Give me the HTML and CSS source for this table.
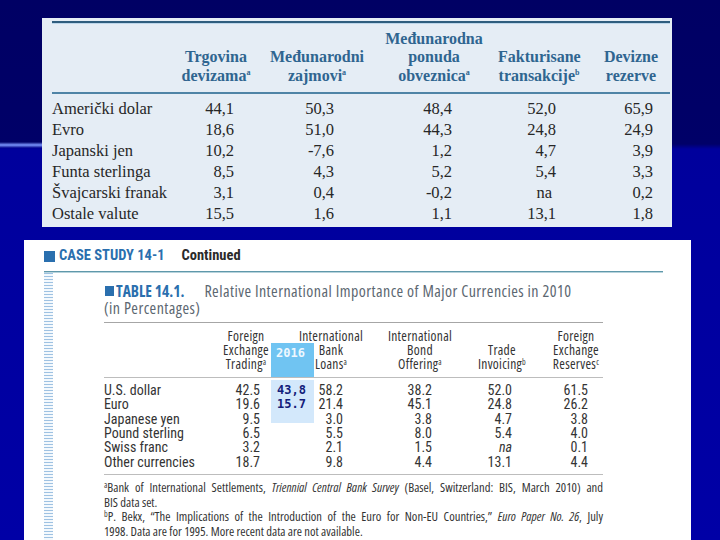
FILE: index.html
```html
<!DOCTYPE html>
<html lang="sr">
<head>
<meta charset="utf-8">
<title>Relativna međunarodna važnost glavnih valuta</title>
<link rel="stylesheet" href="styles.css">
</head>
<body>
<div class="slide">
  <div class="sheet-sr">
    <div class="sr-rule"></div>
    <div class="sr-grid sr-head">
      <div></div>
      <div>Trgovina<br>devizama<sup>a</sup></div>
      <div>Međunarodni<br>zajmovi<sup>a</sup></div>
      <div>Međunarodna<br>ponuda<br>obveznica<sup>a</sup></div>
      <div>Fakturisane<br>transakcije<sup>b</sup></div>
      <div>Devizne<br>rezerve</div>
    </div>
    <div class="sr-grid sr-body">
      <div class="lab">Američki dolar</div><div class="v">44,1</div><div class="v">50,3</div><div class="v">48,4</div><div class="v">52,0</div><div class="v">65,9</div>
      <div class="lab">Evro</div><div class="v">18,6</div><div class="v">51,0</div><div class="v">44,3</div><div class="v">24,8</div><div class="v">24,9</div>
      <div class="lab">Japanski jen</div><div class="v">10,2</div><div class="v">-7,6</div><div class="v">1,2</div><div class="v">4,7</div><div class="v">3,9</div>
      <div class="lab">Funta sterlinga</div><div class="v">8,5</div><div class="v">4,3</div><div class="v">5,2</div><div class="v">5,4</div><div class="v">3,3</div>
      <div class="lab">Švajcarski franak</div><div class="v">3,1</div><div class="v">0,4</div><div class="v">-0,2</div><div class="v na">na</div><div class="v">0,2</div>
      <div class="lab">Ostale valute</div><div class="v">15,5</div><div class="v">1,6</div><div class="v">1,1</div><div class="v">13,1</div><div class="v">1,8</div>
    </div>
  </div>

  <div class="sheet-en">
    <div class="case"><span class="sq"></span><span class="case-t">CASE STUDY 14-1</span><span class="case-c">Continued</span></div>
    <div class="case-rule"></div>
    <div class="en-body">
      <div class="stripes"></div>
      <div class="en-content">
        <div class="title"><span class="tsq"></span><span class="tnum">TABLE 14.1.</span><span class="ttxt">Relative International Importance of Major Currencies in 2010</span></div>
        <div class="title sub">(in Percentages)</div>
        <div class="t2">
          <div class="en-grid en-head">
            <div></div>
            <div>Foreign<br>Exchange<br>Trading<sup>a</sup></div>
            <div>International<br>Bank<br>Loans<sup>a</sup></div>
            <div>International<br>Bond<br>Offering<sup>a</sup></div>
            <div>Trade<br>Invoicing<sup>b</sup></div>
            <div>Foreign<br>Exchange<br>Reserves<sup>c</sup></div>
          </div>
          <div class="en-grid en-rows">
            <div class="lab">U.S. dollar</div><div class="v">42.5</div><div class="v">58.2</div><div class="v">38.2</div><div class="v">52.0</div><div class="v">61.5</div>
            <div class="lab">Euro</div><div class="v">19.6</div><div class="v">21.4</div><div class="v">45.1</div><div class="v">24.8</div><div class="v">26.2</div>
            <div class="lab">Japanese yen</div><div class="v">9.5</div><div class="v">3.0</div><div class="v">3.8</div><div class="v">4.7</div><div class="v">3.8</div>
            <div class="lab">Pound sterling</div><div class="v">6.5</div><div class="v">5.5</div><div class="v">8.0</div><div class="v">5.4</div><div class="v">4.0</div>
            <div class="lab">Swiss franc</div><div class="v">3.2</div><div class="v">2.1</div><div class="v">1.5</div><div class="v"><i>na</i></div><div class="v">0.1</div>
            <div class="lab">Other currencies</div><div class="v">18.7</div><div class="v">9.8</div><div class="v">4.4</div><div class="v">13.1</div><div class="v">4.4</div>
          </div>
          <div class="notes">
            <div class="full"><sup>a</sup>Bank of International Settlements, <i>Triennial Central Bank Survey</i> (Basel, Switzerland: BIS, March 2010) and</div>
            <div>BIS data set.</div>
            <div class="full"><sup>b</sup>P. Bekx, “The Implications of the Introduction of the Euro for Non-EU Countries,” <i>Euro Paper No. 26</i>, July</div>
            <div>1998. Data are for 1995. More recent data are not available.</div>
          </div>
        </div>
      </div>
    </div>
    <div class="ov-year">2016</div>
    <div class="ov-vals">43,8<br>15.7</div>
  </div>
</div>
</body>
</html>
```
FILE: styles.css
```css
html, body {
  margin: 0;
  padding: 0;
}
body {
  width: 720px;
  height: 540px;
  overflow: hidden;
  font-family: "Liberation Serif", serif;
  background:
    linear-gradient(to bottom, rgba(80,110,255,0), #7b96ff 50%, rgba(80,110,255,0)) 0 142px / 42px 6px no-repeat,
    linear-gradient(to bottom, #000064 0, #000068 144px, #00009c 149px, #0000a6 540px);
}
.slide {
  display: flex;
  flex-direction: column;
  align-items: flex-start;
  padding-top: 18px;
}

/* ---------- Serbian table ---------- */
.sheet-sr {
  margin-left: 42px;
  width: 630px;
  height: 209px;
  box-sizing: border-box;
  padding: 3px 0 0 10px;
  background: #e5edf5;
  overflow: hidden;
}
.sr-rule {
  width: 618px;
  height: 2px;
  background: #2f5d7e;
  border-bottom: 1px solid #bcd6ea;
}
.sr-grid {
  display: grid;
  grid-template-columns: 116px 96px 106px 128px 82px 102px;
  width: 618px;
}
.sr-head {
  align-items: end;
  padding: 5.75px 0 6.75px;
  border-bottom: 2px solid #4f84a6;
  font-weight: bold;
  font-size: 16px;
  line-height: 18.5px;
  color: #2f6590;
  text-align: center;
  white-space: nowrap;
}
.sr-head sup {
  font-size: 8px;
  line-height: 0;
  vertical-align: 6px;
}
.sr-body {
  padding-top: 3.5px;
  font-size: 16.5px;
  line-height: 21px;
  color: #272727;
  white-space: nowrap;
}
.sr-body .v { text-align: right; }
.sr-body .v:nth-child(6n+2) { padding-right: 30px; }
.sr-body .v:nth-child(6n+3) { padding-right: 36px; }
.sr-body .v:nth-child(6n+4) { padding-right: 46px; }
.sr-body .v:nth-child(6n+5) { padding-right: 24px; }
.sr-body .v:nth-child(6n+6) { padding-right: 29px; }
.sr-body .v.na { padding-right: 28px; }

/* ---------- English table ---------- */
.sheet-en {
  position: relative;
  margin: 13px 0 0 24px;
  width: 667px;
  height: 300px;
  box-sizing: border-box;
  padding: 8px 0 0 20px;
  background: #ffffff;
  overflow: hidden;
  font-family: "Open Sans", sans-serif;
  font-stretch: 75%;
  color: #343434;
}
.case {
  display: flex;
  align-items: center;
  font-family: "Roboto", sans-serif;
  font-stretch: 75%;
  font-size: 14.5px;
  line-height: 16px;
  font-weight: bold;
}
.sq {
  width: 11px;
  height: 11px;
  background: #2a6fae;
  margin-right: 4px;
}
.case-t { color: #2a6fae; }
.case-c { color: #2a2a2a; margin-left: 17px; }
.case-rule {
  width: 619px;
  height: 1px;
  margin-top: 7px;
  background: #5f98aa;
  border-bottom: 1px solid #b7d3dc;
}
.en-body {
  display: flex;
  align-items: flex-start;
}
.stripes {
  width: 9px;
  height: 270px;
  background: repeating-linear-gradient(to bottom, #9fc2e2 0 1.5px, #f4f9fd 1.5px 3px);
}
.en-content {
  margin-left: 51px;
  padding-top: 9.5px;
}
.title {
  display: flex;
  align-items: center;
  font-size: 15px;
  line-height: 17px;
  color: #5c6771;
  white-space: nowrap;
}
.title.sub,
.ttxt {
  font-size: 16px;
  letter-spacing: 0.45px;
  font-weight: 500;
}
.tsq {
  width: 9px;
  height: 10px;
  background: #2a6fae;
  margin: 0 2px 0 1px;
}
.tnum {
  color: #2a6fae;
  font-weight: bold;
  font-size: 15.5px;
  margin-right: 20px;
}
.ttxt { color: #5c6771; }
.t2 {
  width: 499px;
  margin-top: 5.5px;
  border-top: 1px solid #a6a6a6;
}
.en-grid {
  display: grid;
  grid-template-columns: 96px 92px 78px 100px 64px 84px;
  white-space: nowrap;
}
.en-head {
  align-items: end;
  padding: 6px 0;
  border-bottom: 1px solid #bdbdbd;
  letter-spacing: 0.3px;
  font-size: 13.5px;
  line-height: 14px;
  text-align: center;
  color: #333;
}
.en-head sup, .notes sup {
  font-size: 8px;
  line-height: 0;
  vertical-align: 4px;
}
.en-rows {
  padding: 4.8px 0;
  border-bottom: 1px solid #bdbdbd;
  font-family: "Roboto", sans-serif;
  font-stretch: 75%;
  font-size: 14px;
  line-height: 14.4px;
  color: #343434;
}
.en-rows .v { text-align: right; }
.en-rows .v:nth-child(6n+2) { padding-right: 32px; }
.en-rows .v:nth-child(6n+3) { padding-right: 27px; }
.en-rows .v:nth-child(6n+4) { padding-right: 38px; }
.en-rows .v:nth-child(6n+5) { padding-right: 22px; }
.en-rows .v:nth-child(6n+6) { padding-right: 30px; }
.notes {
  padding-top: 6px;
  font-size: 12.6px;
  line-height: 14.6px;
  color: #333;
  white-space: nowrap;
}
.notes .full {
  text-align: justify;
  text-align-last: justify;
  white-space: normal;
}

/* overlays pasted over the scan */
.ov-year {
  position: absolute;
  left: 247px;
  top: 103px;
  width: 43px;
  height: 34px;
  box-sizing: border-box;
  padding: 3px 0 0 5px;
  background: #70c4f2;
  color: #eef8ff;
  font-family: "DejaVu Sans Mono", monospace;
  font-weight: bold;
  font-size: 12px;
  line-height: 14px;
}
.ov-vals {
  position: absolute;
  left: 247px;
  top: 140px;
  width: 43px;
  height: 43px;
  box-sizing: border-box;
  padding: 3px 0 0 6px;
  background: #d3e8fb;
  color: #13207a;
  font-family: "DejaVu Sans Mono", monospace;
  font-weight: bold;
  font-size: 12px;
  line-height: 14.4px;
}
```
